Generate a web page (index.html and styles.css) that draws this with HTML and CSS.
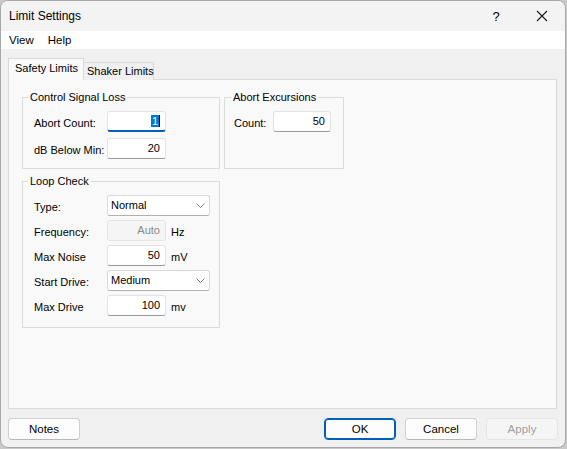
FILE: index.html
```html
<!DOCTYPE html>
<html>
<head>
	<title>Limit Settings</title>
	<link rel="stylesheet" href="styles.css">
</head>
<body>
	<div class="ventana">
		<div class="titulo">
			<span class="nombre">Limit Settings</span>
			<span class="boton-cap">?</span>
			<span class="boton-cap">
				<svg width="12" height="12" viewBox="0 0 12 12"><path d="M1 1L11 11M11 1L1 11" stroke="#1a1a1a" stroke-width="1.1" fill="none"/></svg>
			</span>
		</div>
		<div class="menu">
			<span>View</span>
			<span>Help</span>
		</div>
		<div class="cuerpo">
			<div class="pestanas">
				<div class="pestana activa">Safety Limits</div>
				<div class="pestana">Shaker Limits</div>
			</div>
			<div class="panel">
				<div class="fila-grupos">
					<fieldset class="grupo g-senal">
						<legend>Control Signal Loss</legend>
						<div class="rejilla r-senal">
							<span class="etiqueta">Abort Count:</span>
							<div class="campo foco"><span class="marcado">1</span></div>
							<span class="etiqueta">dB Below Min:</span>
							<div class="campo">20</div>
						</div>
					</fieldset>
					<fieldset class="grupo g-excursion">
						<legend>Abort Excursions</legend>
						<div class="rejilla r-excursion">
							<span class="etiqueta">Count:</span>
							<div class="campo">50</div>
						</div>
					</fieldset>
				</div>
				<fieldset class="grupo g-lazo">
					<legend>Loop Check</legend>
					<div class="rejilla r-lazo">
						<span class="etiqueta">Type:</span>
						<div class="lista">Normal
							<svg class="flecha" width="9" height="5" viewBox="0 0 9 5"><path d="M0.5 0.5L4.5 4.5L8.5 0.5" stroke="#707070" stroke-width="0.9" fill="none"/></svg>
						</div>
						<span class="etiqueta">Frequency:</span>
						<div class="campo apagado">Auto</div>
						<span class="unidad">Hz</span>
						<span class="etiqueta">Max Noise</span>
						<div class="campo">50</div>
						<span class="unidad">mV</span>
						<span class="etiqueta">Start Drive:</span>
						<div class="lista">Medium
							<svg class="flecha" width="9" height="5" viewBox="0 0 9 5"><path d="M0.5 0.5L4.5 4.5L8.5 0.5" stroke="#707070" stroke-width="0.9" fill="none"/></svg>
						</div>
						<span class="etiqueta">Max Drive</span>
						<div class="campo">100</div>
						<span class="unidad">mv</span>
					</div>
				</fieldset>
			</div>
			<div class="botones">
				<div class="boton">Notes</div>
				<div class="hueco"></div>
				<div class="boton defecto">OK</div>
				<div class="boton">Cancel</div>
				<div class="boton inactivo">Apply</div>
			</div>
		</div>
	</div>
</body>
</html>
```

FILE: styles.css
```css
*{box-sizing: border-box;}
html{background: #c9c9c9;}
body{
	margin: 0;
	font-family: "Liberation Sans", Arial, sans-serif;
	font-size: 11px;
	color: #000;
	white-space: nowrap;
}
.ventana{
	width: 566px;
	height: 448px;
	border: 1px solid #a8a8a8;
	border-radius: 8px;
	overflow: hidden;
	display: flex;
	flex-direction: column;
	background: #f0f0f0;
}
.titulo{
	height: 30px;
	display: flex;
	align-items: center;
	background: #f3f3f3;
	font-size: 12px;
}
.nombre{
	flex: 1;
	padding-left: 8px;
}
.boton-cap{
	width: 46px;
	height: 30px;
	display: flex;
	align-items: center;
	justify-content: center;
	font-size: 13px;
}
.menu{
	height: 18px;
	background: #fff;
	display: flex;
	align-items: center;
	gap: 14px;
	padding-left: 8px;
	font-size: 11.5px;
}
.cuerpo{
	flex: 1;
	display: flex;
	flex-direction: column;
	padding: 9px 8px 7px 7px;
}
.pestanas{
	display: flex;
	align-items: flex-end;
	height: 22px;
	margin-bottom: -1px;
	position: relative;
	z-index: 1;
}
.pestana{
	height: 18px;
	width: 70px;
	padding: 0 0 0 3px;
	line-height: 17px;
	border: 1px solid #d9d9d9;
	border-bottom: none;
	background: #f0f0f0;
	border-left: none;
}
.pestana.activa{
	height: 22px;
	width: 76px;
	padding-left: 6px;
	line-height: 19px;
	background: #f9f9f9;
	border-left: 1px solid #d9d9d9;
}
.panel{
	flex: 1;
	background: #f9f9f9;
	border: 1px solid #d9d9d9;
	padding: 10px 13px;
}
.fila-grupos{
	display: flex;
	gap: 4px;
}
.grupo{
	margin: 0;
	border: 1px solid #dcdcdc;
	padding: 7px 9px 9px 11px;
	min-width: 0;
}
legend{
	padding: 0 2px;
	margin-left: -6px;
	line-height: 14px;
}
.g-senal{ width: 198px; }
.g-excursion{ width: 120px; padding-left: 9px; }
.g-excursion legend{ margin-left: -3px; }
.g-lazo{
	width: 198px;
	margin-top: 5px;
	padding: 7px 9px 11px 11px;
}
.rejilla{
	display: grid;
	grid-auto-rows: 21px;
	align-items: center;
}
.r-senal{
	grid-template-columns: 73px 59px;
	row-gap: 6px;
}
.r-excursion{ grid-template-columns: 39px 58px; }
.r-lazo{
	grid-template-columns: 73px 59px 44px;
	row-gap: 4px;
}
.r-lazo .etiqueta{ grid-column: 1; }
.etiqueta{ padding-top: 2px; }
.campo{
	height: 21px;
	background: #fff;
	border: 1px solid #e3e3e3;
	border-bottom-color: #9a9a9a;
	border-radius: 3px;
	text-align: right;
	padding-right: 5px;
	line-height: 19px;
}
.campo.foco{
	border-bottom: 2px solid #005fb8;
}
.marcado{
	background: #0078d7;
	color: #fff;
	padding: 0 1px;
	border-right: 1px solid #000;
}
.campo.apagado{
	background: #f5f5f5;
	border-color: #e5e5e5;
	color: #8a8a8a;
}
.unidad{
	padding-left: 5px;
	padding-top: 2px;
}
.lista{
	grid-column: 2 / 4;
	height: 21px;
	background: #fff;
	border: 1px solid #dadada;
	border-bottom-color: #b0b0b0;
	border-radius: 3px;
	padding-left: 3px;
	line-height: 19px;
	display: flex;
	align-items: center;
	justify-content: space-between;
	padding-right: 4px;
}
.botones{
	display: flex;
	margin-top: 9px;
	margin-right: -1px;
	gap: 9px;
}
.hueco{ flex: 1; }
.boton{
	width: 72px;
	height: 22px;
	background: #fdfdfd;
	border: 1px solid #d0d0d0;
	border-bottom-color: #b8b8b8;
	border-radius: 4px;
	text-align: center;
	line-height: 20px;
	font-size: 11.5px;
}
.boton.defecto{
	border: 1px solid #005fb8;
	box-shadow: inset 0 0 0 1px #005fb8;
}
.boton.inactivo{
	background: #f5f5f5;
	border-color: #e5e5e5;
	color: #a0a0a0;
}
```
